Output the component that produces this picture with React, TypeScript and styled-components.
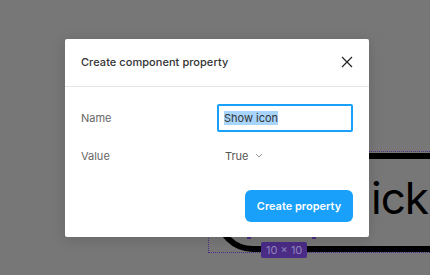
import React from "react";
import styled, { createGlobalStyle } from "styled-components";

const Global = createGlobalStyle`
  html, body { margin: 0; padding: 0; }
  body {
    width: 430px;
    height: 275px;
    overflow: hidden;
    background: #777777;
    font-family: Inter, "Noto Sans", sans-serif;
  }
`;

const Stage = styled.div`
  position: relative;
  width: 430px;
  height: 275px;
  overflow: hidden;
  background: #777777;
`;

/* Dimmed canvas content behind the dialog */
const Frame = styled.div`
  position: absolute;
  left: 215px;
  top: 153px;
  width: 300px;
  height: 99px;
  box-sizing: border-box;
  border: 6px solid #000;
  border-radius: 38px;
`;

const BigText = styled.div`
  position: absolute;
  left: 371px;
  top: 171px;
  font-family: Inter, "Noto Sans", sans-serif;
  font-size: 44px;
  line-height: 54px;
  color: #000;
  letter-spacing: -1px;
  white-space: nowrap;
`;

const Selection = styled.div`
  position: absolute;
  left: 208px;
  top: 151px;
  width: 300px;
  height: 102px;
  box-sizing: border-box;
  border: 1px dotted #4b2d86;
`;

const Handle = styled.div`
  position: absolute;
  top: 235px;
  width: 4px;
  height: 4px;
  background: #4b2d86;
`;

const SizeBadge = styled.div`
  position: absolute;
  left: 261px;
  top: 242px;
  height: 16px;
  padding: 0 5px;
  border-radius: 2px;
  background: #4a2b86;
  color: #9384bd;
  font-size: 11px;
  line-height: 16px;
  font-family: Inter, "Noto Sans", sans-serif;
`;

const Overlay = styled.div`
  position: absolute;
  inset: 0;
  display: flex;
  align-items: center;
  justify-content: center;
  padding-left: 4px;
`;

const Dialog = styled.div`
  width: 304px;
  height: 198px;
  background: #fff;
  border-radius: 2px;
  box-shadow: 0 2px 14px rgba(0, 0, 0, 0.15);
  display: flex;
  flex-direction: column;
`;

const Header = styled.div`
  height: 48px;
  box-sizing: border-box;
  border-bottom: 1px solid #e5e5e5;
  display: flex;
  align-items: center;
  justify-content: space-between;
  padding: 0 16px;
`;

const Title = styled.div`
  font-size: 11px;
  font-weight: 500;
  color: #333;
  letter-spacing: 0.05px;
`;

const CloseButton = styled.button`
  border: 0;
  background: none;
  padding: 0;
  width: 14px;
  height: 14px;
  display: flex;
  align-items: center;
  justify-content: center;
  margin-right: -1px;
`;

const Body = styled.div`
  flex: 1;
  display: flex;
  flex-direction: column;
  padding: 17px 16px 15px 16px;
`;

const Grid = styled.div`
  display: grid;
  grid-template-columns: 136px 136px;
  grid-auto-rows: 28px;
  row-gap: 10px;
  align-items: center;
`;

const Label = styled.div`
  font-size: 11px;
  color: #666;
`;

const InputBox = styled.div`
  height: 28px;
  box-sizing: border-box;
  border: 2px solid #18a0fb;
  border-radius: 2px;
  display: flex;
  align-items: center;
  padding-left: 5px;
`;

const Selected = styled.span`
  background: #a8d5fd;
  color: #333;
  font-size: 11px;
  line-height: 14px;
`;

const SelectValue = styled.div`
  display: flex;
  align-items: center;
  gap: 6px;
  padding-left: 8px;
  font-size: 11px;
  color: #555;
`;

const Footer = styled.div`
  margin-top: auto;
  display: flex;
  justify-content: flex-end;
`;

const PrimaryButton = styled.button`
  height: 32px;
  width: 108px;
  border: 0;
  border-radius: 6px;
  background: #18a0fb;
  color: #fff;
  font-family: Inter, "Noto Sans", sans-serif;
  font-size: 11px;
  font-weight: 600;
  padding: 0;
`;

export default function App() {
  return (
    <>
      <Global />
      <Stage>
        <Selection />
        <Frame />
        <BigText>ick</BigText>
        <Handle style={{ left: 247 }} />
        <Handle style={{ left: 312 }} />
        <SizeBadge>10 × 10</SizeBadge>
        <Overlay>
          <Dialog>
            <Header>
              <Title>Create component property</Title>
              <CloseButton aria-label="Close">
                <svg width="12" height="12" viewBox="0 0 12 12">
                  <path d="M1 1 L11 11 M11 1 L1 11" stroke="#222" strokeWidth="1.2" fill="none" />
                </svg>
              </CloseButton>
            </Header>
            <Body>
              <Grid>
                <Label>Name</Label>
                <InputBox>
                  <Selected>Show icon</Selected>
                </InputBox>
                <Label>Value</Label>
                <SelectValue>
                  True
                  <svg width="8" height="5" viewBox="0 0 8 5">
                    <path d="M1 1 L4 4 L7 1" stroke="#999" strokeWidth="1" fill="none" />
                  </svg>
                </SelectValue>
              </Grid>
              <Footer>
                <PrimaryButton>Create property</PrimaryButton>
              </Footer>
            </Body>
          </Dialog>
        </Overlay>
      </Stage>
    </>
  );
}
